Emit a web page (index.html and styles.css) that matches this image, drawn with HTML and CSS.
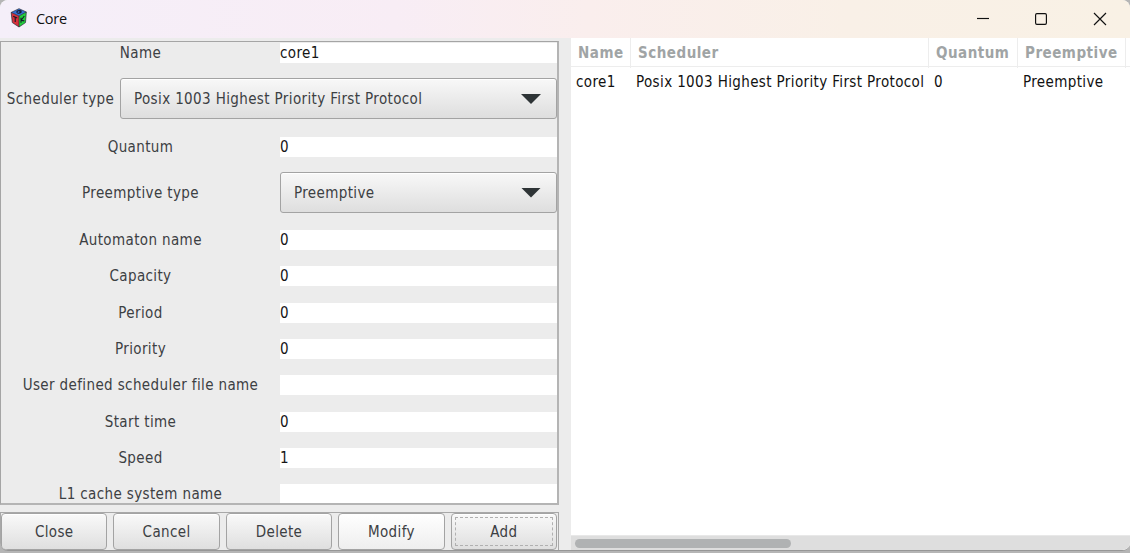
FILE: index.html
```html
<!DOCTYPE html>
<html lang="en">
<head>
<meta charset="utf-8">
<title>Core</title>
<link rel="stylesheet" href="styles.css">
</head>
<body>
<div class="window">
  <header class="titlebar">
    <svg class="logo" width="18" height="20" viewBox="0 0 18 20">
      <path d="M9 .7 16.3 4 9 8 1.2 4.4Z" fill="#3470d4"/>
      <path d="M1.2 4.4 9 8v11L2.3 14.6Z" fill="#d8323b"/>
      <path d="M16.3 4 9 8v11l6.5-4.4Z" fill="#22d03c"/>
      <path d="M9 .7 16.3 4l-.8 10.6L9 19l-6.7-4.4L1.2 4.4ZM1.2 4.4 9 8l7.3-4M9 8v11" fill="none" stroke="#222837" stroke-width=".7"/>
      <path d="M11.4 3.1C9.5 2 6.4 3 7 4.4c.7 1.3 3.6 1 4.2-.4H9.3M3.2 8.2l4 1.7M5.2 9.2v4.7M11 9.7v5M14.3 8l-3.1 4.3 3.1.6" fill="none" stroke="#14192a" stroke-width="1.1"/>
    </svg>
    <span class="title">Core</span>
    <svg class="controls" width="132" height="14" viewBox="0 0 132 14" fill="none" stroke="#111" stroke-width="1.15">
      <path d="M0 6.5h12"/>
      <rect x="58.6" y="1.6" width="10.8" height="10.8" rx="1.3"/>
      <path d="m117 1 12 12M129 1l-12 12"/>
    </svg>
  </header>
  <main class="content">
    <section class="left">
      <div class="form">
        <div class="row"><label>Name</label><div class="entry">core1</div></div>
        <div class="row combo wide"><label>Scheduler type</label><div class="select"><span>Posix 1003 Highest Priority First Protocol</span><i></i></div></div>
        <div class="row"><label>Quantum</label><div class="entry">0</div></div>
        <div class="row combo"><label>Preemptive type</label><div class="select"><span>Preemptive</span><i></i></div></div>
        <div class="row"><label>Automaton name</label><div class="entry">0</div></div>
        <div class="row"><label>Capacity</label><div class="entry">0</div></div>
        <div class="row"><label>Period</label><div class="entry">0</div></div>
        <div class="row"><label>Priority</label><div class="entry">0</div></div>
        <div class="row"><label>User defined scheduler file name</label><div class="entry"></div></div>
        <div class="row"><label>Start time</label><div class="entry">0</div></div>
        <div class="row"><label>Speed</label><div class="entry">1</div></div>
        <div class="row"><label>L1 cache system name</label><div class="entry"></div></div>
      </div>
      <div class="actions">
        <button>Close</button><button>Cancel</button><button>Delete</button><button class="hover">Modify</button><button class="focus">Add</button>
      </div>
    </section>
    <section class="list">
      <div class="cells head"><span>Name</span><span>Scheduler</span><span>Quantum</span><span>Preemptive</span></div>
      <div class="cells data"><span>core1</span><span>Posix 1003 Highest Priority First Protocol</span><span>0</span><span>Preemptive</span></div>
      <div class="scroll"><div class="thumb"></div></div>
    </section>
  </main>
</div>
</body>
</html>
```
FILE: styles.css
```css
* { box-sizing: border-box; }
body {
  margin: 0;
  width: 1130px;
  height: 553px;
  overflow: hidden;
  background: #b5b5b5;
  font-family: "DejaVu Sans Condensed", "DejaVu Sans", sans-serif;
  font-stretch: condensed;
  font-size: 15px;
  letter-spacing: .375px;
  color: #3c4043;
}
.window {
  width: 1130px;
  height: 551px;
  display: flex;
  flex-direction: column;
  background: #ececec;
  border-radius: 8px;
  border-bottom: 1px solid #969696;
  overflow: hidden;
}
.titlebar {
  height: 38px;
  flex: none;
  display: flex;
  align-items: center;
  padding: 0 21px 0 10px;
  background: linear-gradient(90deg, #f5eff9 0, #f8edf5 35%, #faeeed 52%, #f9f0e7 75%, #f9f1e5 100%);
}
.logo { margin-top: -2px; }
.title {
  margin: -2px 0 0 8px;
  font: 14.5px "Open Sans", sans-serif;
  letter-spacing: -.3px;
  color: #111;
}
.controls { margin-left: auto; }
.content { flex: 1; min-height: 0; display: flex; }
.left { width: 559px; margin-right: 12px; padding-top: 3px; display: flex; flex-direction: column; }
.form {
  height: 464px;
  flex: none;
  border: 1px solid #a5a5a5;
  border-right: 2px solid #b4b4b4;
  border-bottom: 2px solid #b4b4b4;
  overflow: hidden;
  display: flex;
  flex-direction: column;
  gap: 16px;
}
.row {
  height: 20.3px;
  flex: none;
  display: grid;
  grid-template-columns: 279px 1fr;
  align-items: center;
  white-space: nowrap;
}
.row.combo { height: 41.3px; }
.row.wide { grid-template-columns: 119px 1fr; }
.row label { text-align: center; line-height: 22px; }
.row.wide label { padding-right: 0; }
.entry { height: 20px; line-height: 21px; background: #fff; color: #151515; }
.select {
  height: 41px;
  border: 1px solid #a3a3a3;
  border-radius: 3px;
  background: linear-gradient(#f8f8f8, #dedede);
  box-shadow: inset 0 1px #fff;
  display: flex;
  align-items: center;
  justify-content: space-between;
  padding: 0 15px 0 13px;
}
.select i { width: 20px; height: 10px; background: #2e3436; clip-path: polygon(0 0, 100% 0, 50% 100%); }
.actions {
  height: 38px;
  margin-top: 7px;
  flex: none;
  display: flex;
  gap: 6px;
  padding: 0 1px 0 0;
  border: 1px solid #a8a8a8;
  border-bottom: 0;
}
button {
  flex: 1;
  height: 37px;
  padding: 0;
  border: 1px solid #a3a3a3;
  border-radius: 4px;
  background: linear-gradient(#f9f9f9, #dfdfdf);
  box-shadow: inset 0 1px #fff;
  font: inherit;
  letter-spacing: inherit;
  color: inherit;
}
.hover { background: linear-gradient(#fff, #eee); }
.focus { outline: 1px dashed #b0b0b0; outline-offset: -5px; }
.list { flex: 1; background: #fff; display: flex; flex-direction: column; }
.cells { display: grid; grid-template-columns: 60px 298px 89px 108px; white-space: nowrap; }
.head { height: 29px; line-height: 30px; font-weight: bold; letter-spacing: .5px; color: #a0a4a5; border-bottom: 1px solid #ededed; }
.head span { padding-left: 7px; border-right: 1px solid #ededed; }
.data { height: 29px; line-height: 30px; color: #111; }
.data span { padding-left: 5px; }
.scroll { height: 15px; margin-top: auto; padding: 3px 4px; background: #dedede; border-top: 1px solid #e8e8e8; }
.thumb { width: 216px; height: 9px; border-radius: 5px; background: #b0b2b3; }
```
